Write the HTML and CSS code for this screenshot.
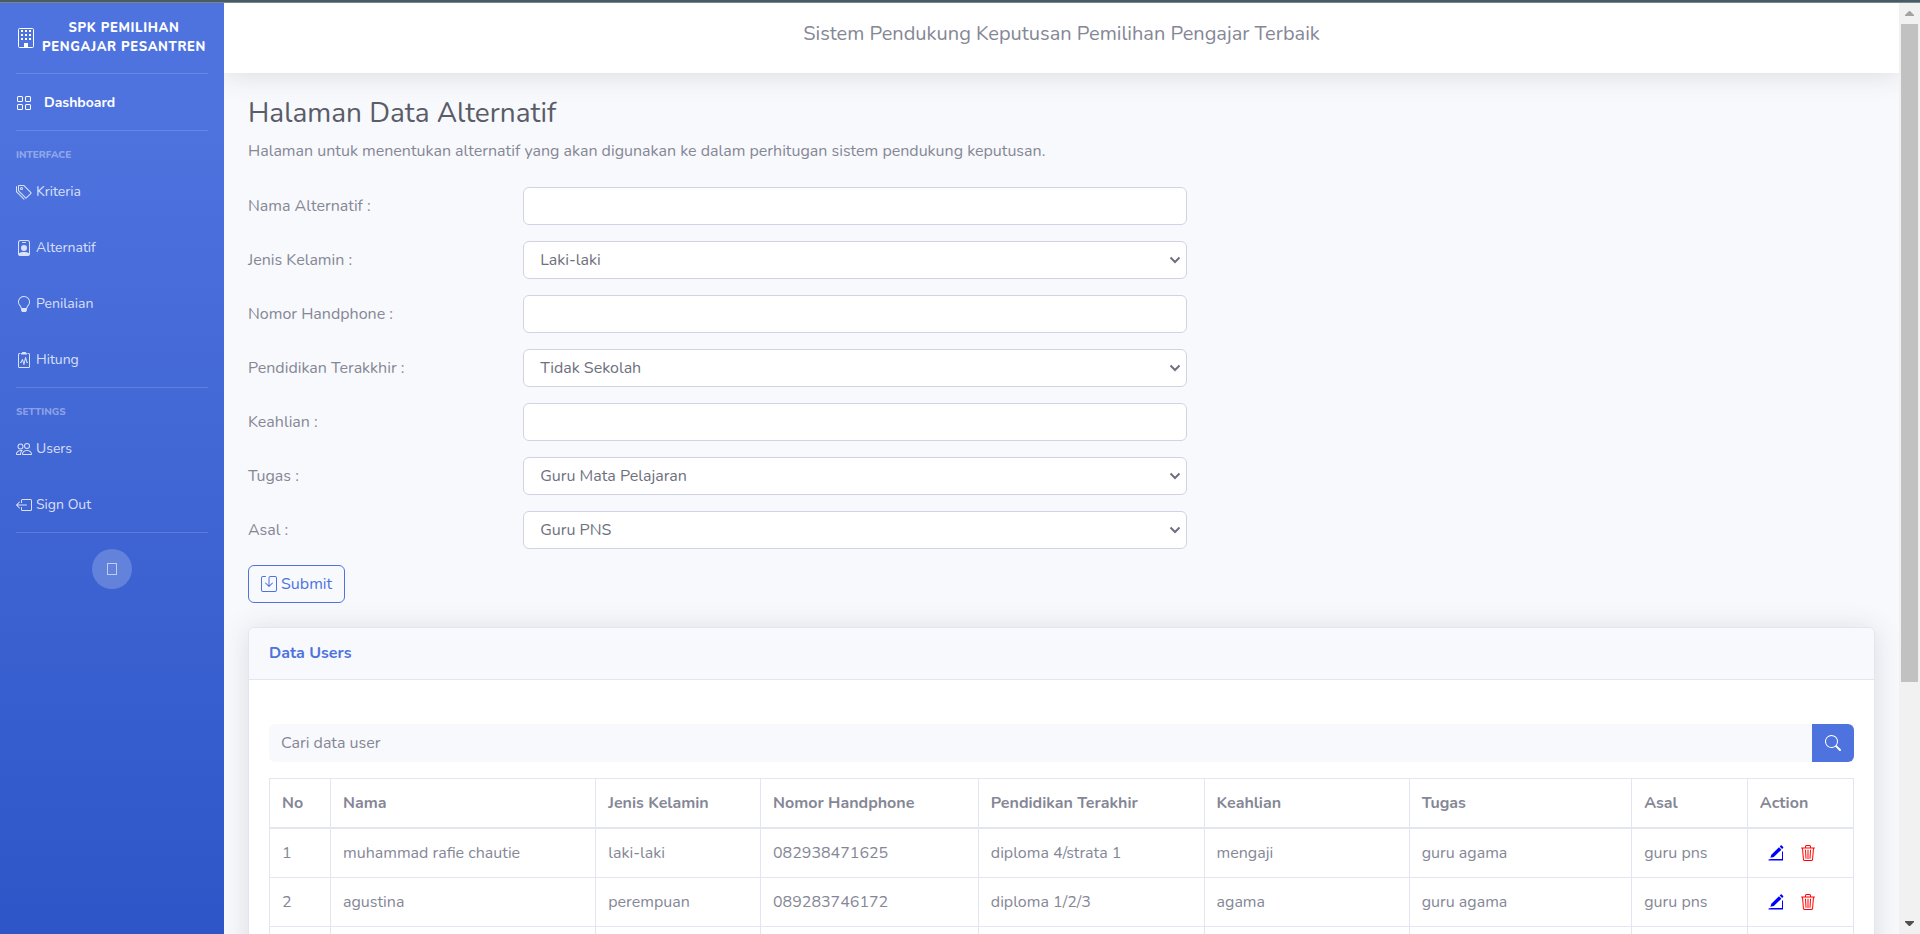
FILE: index.html
```html
<!DOCTYPE html>
<html lang="id">
<head>
<meta charset="utf-8">
<title>SPK Pemilihan Pengajar Pesantren</title>
<link rel="stylesheet" href="styles.css">
</head>
<body>
<div class="frame-edge"></div>
<div class="viewport">
  <nav class="sidebar">
    <a class="brand" href="#">
      <svg class="brand-icon" viewBox="0 0 20 20"><rect x="2.500" y=".5" width="15" height="19" rx="1" fill="none" stroke="currentColor"/><path d="M5 2h2v2H5zM9 2h2v2H9zM13 2h2v2h-2zM5 6h2v2H5zM9 6h2v2H9zM13 6h2v2h-2zM5 10h2v2H5zM9 10h2v2H9zM13 10h2v2h-2zM8 15h4v5H8z"/></svg>
      <span class="brand-text">SPK Pemilihan Pengajar Pesantren</span>
    </a>
    <hr class="divider">
    <a class="nav-link nav-link-active" href="#">
      <svg class="icon" viewBox="0 0 16 16"><path d="M1 2.500A1.500 1.500 0 0 1 2.500 1h3A1.500 1.500 0 0 1 7 2.500v3A1.500 1.500 0 0 1 5.500 7h-3A1.500 1.500 0 0 1 1 5.500zM2.500 2a.5.5 0 0 0-.5.5v3a.5.5 0 0 0 .5.5h3a.5.5 0 0 0 .5-.5v-3a.5.5 0 0 0-.5-.5zm6.500.5A1.500 1.500 0 0 1 10.500 1h3A1.500 1.500 0 0 1 15 2.500v3A1.500 1.500 0 0 1 13.500 7h-3A1.500 1.500 0 0 1 9 5.500zm1.500-.5a.5.5 0 0 0-.5.5v3a.5.5 0 0 0 .5.5h3a.5.5 0 0 0 .5-.5v-3a.5.5 0 0 0-.5-.5zM1 10.500A1.500 1.500 0 0 1 2.500 9h3A1.500 1.500 0 0 1 7 10.500v3A1.500 1.500 0 0 1 5.500 15h-3A1.500 1.500 0 0 1 1 13.500zm1.500-.5a.5.5 0 0 0-.5.5v3a.5.5 0 0 0 .5.5h3a.5.5 0 0 0 .5-.5v-3a.5.5 0 0 0-.5-.5zm6.500.5A1.500 1.500 0 0 1 10.500 9h3a1.500 1.500 0 0 1 1.500 1.500v3a1.500 1.500 0 0 1-1.500 1.500h-3A1.500 1.500 0 0 1 9 13.500zm1.500-.5a.5.5 0 0 0-.5.5v3a.5.5 0 0 0 .5.5h3a.5.5 0 0 0 .5-.5v-3a.5.5 0 0 0-.5-.5z"/></svg>
      <span>Dashboard</span>
    </a>
    <hr class="divider">
    <div class="nav-heading">Interface</div>
    <a class="nav-link" href="#">
      <svg class="icon" viewBox="0 0 16 16"><path d="M3 2v4.586l7 7L14.586 9l-7-7zM2 2a1 1 0 0 1 1-1h4.586a1 1 0 0 1 .707.293l7 7a1 1 0 0 1 0 1.414l-4.586 4.586a1 1 0 0 1-1.414 0l-7-7A1 1 0 0 1 2 6.586z"/><path d="M5.500 5a.5.5 0 1 1 0-1 .5.5 0 0 1 0 1m0 1a1.500 1.500 0 1 0 0-3 1.500 1.500 0 0 0 0 3M1 7.086a1 1 0 0 0 .293.707L8.750 15.250l-.043.043a1 1 0 0 1-1.414 0l-7-7A1 1 0 0 1 0 7.586V3a1 1 0 0 1 1-1z"/></svg>
      <span>Kriteria</span>
    </a>
    <a class="nav-link" href="#">
      <svg class="icon" viewBox="0 0 16 16"><path d="M6.500 2a.5.5 0 0 0 0 1h3a.5.5 0 0 0 0-1zM11 8a3 3 0 1 1-6 0 3 3 0 0 1 6 0"/><path d="M4.500 0A2.500 2.500 0 0 0 2 2.500V14a2 2 0 0 0 2 2h8a2 2 0 0 0 2-2V2.500A2.500 2.500 0 0 0 11.500 0zM3 2.500A1.500 1.500 0 0 1 4.500 1h7A1.500 1.500 0 0 1 13 2.500v10.795a4.200 4.200 0 0 0-.776-.492C11.392 12.387 10.063 12 8 12s-3.392.387-4.224.803a4.200 4.200 0 0 0-.776.492z"/></svg>
      <span>Alternatif</span>
    </a>
    <a class="nav-link" href="#">
      <svg class="icon" viewBox="0 0 16 16"><path d="M2 6a6 6 0 1 1 10.174 4.310c-.203.196-.359.4-.453.619l-.762 1.769A.5.5 0 0 1 10.500 13a.5.5 0 0 1 0 1 .5.5 0 0 1 0 1l-.224.447a1 1 0 0 1-.894.553H6.618a1 1 0 0 1-.894-.553L5.500 15a.5.5 0 0 1 0-1 .5.5 0 0 1 0-1 .5.5 0 0 1-.46-.302l-.761-1.770a2 2 0 0 0-.453-.618A5.980 5.980 0 0 1 2 6m6-5a5 5 0 0 0-3.479 8.592c.263.254.514.564.676.941L5.830 12h4.342l.632-1.467c.162-.377.413-.687.676-.941A5 5 0 0 0 8 1"/></svg>
      <span>Penilaian</span>
    </a>
    <a class="nav-link" href="#">
      <svg class="icon" viewBox="0 0 16 16"><path d="M9.500 0a.5.5 0 0 1 .5.5.5.5 0 0 0 .5.5.5.5 0 0 1 .5.5V2a.5.5 0 0 1-.5.5h-5A.5.5 0 0 1 5 2v-.5a.5.5 0 0 1 .5-.5.5.5 0 0 0 .5-.5.5.5 0 0 1 .5-.5z"/><path d="M3 2.500a.5.5 0 0 1 .5-.5H4a.5.5 0 0 0 0-1h-.5A1.500 1.500 0 0 0 2 2.500v12A1.500 1.500 0 0 0 3.500 16h9a1.500 1.500 0 0 0 1.500-1.500v-12A1.500 1.500 0 0 0 12.500 1H12a.5.5 0 0 0 0 1h.5a.5.5 0 0 1 .5.5v12a.5.5 0 0 1-.5.5h-9a.5.5 0 0 1-.5-.5z"/><path d="M9.979 5.356a.5.5 0 0 0-.968.040L7.920 10.490l-.940-3.135a.5.5 0 0 0-.926-.080L4.690 10H4.500a.5.5 0 0 0 0 1H5a.5.5 0 0 0 .447-.276l.936-1.873 1.138 3.793a.5.5 0 0 0 .968-.040L9.580 7.510l.940 3.135A.5.5 0 0 0 11 11h.5a.5.5 0 0 0 0-1h-.128z"/></svg>
      <span>Hitung</span>
    </a>
    <hr class="divider">
    <div class="nav-heading">Settings</div>
    <a class="nav-link" href="#">
      <svg class="icon" viewBox="0 0 16 16"><path d="M15 14s1 0 1-1-1-4-5-4-5 3-5 4 1 1 1 1zm-7.978-1L7 12.996c.001-.264.167-1.030.760-1.720C8.312 10.629 9.282 10 11 10c1.717 0 2.687.630 3.240 1.276.593.690.758 1.457.760 1.720l-.008.002-.014.002zM11 7a2 2 0 1 0 0-4 2 2 0 0 0 0 4m3-2a3 3 0 1 1-6 0 3 3 0 0 1 6 0M6.936 9.280a6 6 0 0 0-1.230-.247A7 7 0 0 0 5 9c-4 0-5 3-5 4q0 1 1 1h4.216A2.240 2.240 0 0 1 5 13c0-1.010.377-2.042 1.090-2.904.243-.294.526-.569.846-.816M4.920 10A5.500 5.500 0 0 0 4 13H1c0-.260.164-1.030.760-1.724.545-.636 1.492-1.256 3.160-1.275zM1.500 5.500a3 3 0 1 1 6 0 3 3 0 0 1-6 0m3-2a2 2 0 1 0 0 4 2 2 0 0 0 0-4"/></svg>
      <span>Users</span>
    </a>
    <a class="nav-link" href="#">
      <svg class="icon" viewBox="0 0 16 16"><path fill-rule="evenodd" d="M6 12.500a.5.5 0 0 0 .5.5h8a.5.5 0 0 0 .5-.5v-9a.5.5 0 0 0-.5-.5h-8a.5.5 0 0 0-.5.5v2a.5.5 0 0 1-1 0v-2A1.500 1.500 0 0 1 6.500 2h8A1.500 1.500 0 0 1 16 3.500v9a1.500 1.500 0 0 1-1.500 1.500h-8A1.500 1.500 0 0 1 5 12.500v-2a.5.5 0 0 1 1 0z"/><path fill-rule="evenodd" d="M.146 8.354a.5.5 0 0 1 0-.708l3-3a.5.5 0 1 1 .708.708L1.707 7.500H10.500a.5.5 0 0 1 0 1H1.707l2.147 2.146a.5.5 0 0 1-.708.708z"/></svg>
      <span>Sign Out</span>
    </a>
    <hr class="divider">
    <button class="toggle" type="button" aria-label="Toggle sidebar"><span class="toggle-glyph"></span></button>
  </nav>

  <main class="content">
    <header class="topbar">Sistem Pendukung Keputusan Pemilihan Pengajar Terbaik</header>
    <div class="page">
      <h1 class="page-title">Halaman Data Alternatif</h1>
      <p class="lead">Halaman untuk menentukan alternatif yang akan digunakan ke dalam perhitugan sistem pendukung keputusan.</p>

      <form class="form">
        <div class="form-row"><label class="form-label" for="nama">Nama Alternatif :</label><input class="control" id="nama" type="text"></div>
        <div class="form-row"><label class="form-label" for="jk">Jenis Kelamin :</label><select class="control select" id="jk"><option>Laki-laki</option><option>Perempuan</option></select></div>
        <div class="form-row"><label class="form-label" for="hp">Nomor Handphone :</label><input class="control" id="hp" type="text"></div>
        <div class="form-row"><label class="form-label" for="pendidikan">Pendidikan Terakkhir :</label><select class="control select" id="pendidikan"><option>Tidak Sekolah</option></select></div>
        <div class="form-row"><label class="form-label" for="keahlian">Keahlian :</label><input class="control" id="keahlian" type="text"></div>
        <div class="form-row"><label class="form-label" for="tugas">Tugas :</label><select class="control select" id="tugas"><option>Guru Mata Pelajaran</option></select></div>
        <div class="form-row"><label class="form-label" for="asal">Asal :</label><select class="control select" id="asal"><option>Guru PNS</option></select></div>
        <button class="submit" type="button">
          <svg class="icon" viewBox="0 0 16 16"><path d="M2 1a1 1 0 0 0-1 1v12a1 1 0 0 0 1 1h12a1 1 0 0 0 1-1V2a1 1 0 0 0-1-1H9.500a1 1 0 0 0-1 1v7.293l2.646-2.647a.5.5 0 0 1 .708.708l-3.500 3.500a.5.5 0 0 1-.708 0l-3.500-3.500a.5.5 0 1 1 .708-.708L7.500 9.293V2a2 2 0 0 1 2-2H14a2 2 0 0 1 2 2v12a2 2 0 0 1-2 2H2a2 2 0 0 1-2-2V2a2 2 0 0 1 2-2h2.500a.5.5 0 0 1 0 1z"/></svg>
          <span>Submit</span>
        </button>
      </form>

      <section class="card">
        <h2 class="card-header">Data Users</h2>
        <div class="card-body">
          <form class="search">
            <input class="search-input" type="text" placeholder="Cari data user" aria-label="Cari data user">
            <button class="search-button" type="button" aria-label="Cari"><svg class="icon" viewBox="0 0 16 16"><path d="M11.742 10.344a6.500 6.500 0 1 0-1.397 1.398h-.001q.044.060.098.115l3.850 3.850a1 1 0 0 0 1.415-1.414l-3.850-3.850a1 1 0 0 0-.115-.100zM12 6.500a5.500 5.500 0 1 1-11 0 5.500 5.500 0 0 1 11 0"/></svg></button>
          </form>
          <table class="table">
            <colgroup><col class="col-no"><col class="col-nama"><col class="col-kelamin"><col class="col-hp"><col class="col-pendidikan"><col class="col-keahlian"><col class="col-tugas"><col class="col-asal"><col class="col-action"></colgroup>
            <thead>
              <tr><th>No</th><th>Nama</th><th>Jenis Kelamin</th><th>Nomor Handphone</th><th>Pendidikan Terakhir</th><th>Keahlian</th><th>Tugas</th><th>Asal</th><th>Action</th></tr>
            </thead>
            <tbody>
              <tr><td>1</td><td>muhammad rafie chautie</td><td>laki-laki</td><td>082938471625</td><td>diploma 4/strata 1</td><td>mengaji</td><td>guru agama</td><td>guru pns</td>
                <td><div class="actions">
                  <button class="action action-edit" type="button" aria-label="Edit"><svg class="icon" viewBox="0 0 16 16"><path d="M12.700.6a.8.8 0 0 1 1.100 0l1.300 1.300a.8.8 0 0 1 0 1.100l-1 1-2.400-2.400zM11 2.300l2.400 2.400-7.600 7.200-3.400.9.900-3.100zM15 6v9.500H.5v-1L3 14h11V7z"/></svg></button>
                  <button class="action action-delete" type="button" aria-label="Hapus"><svg class="icon" viewBox="0 0 16 16"><path d="M6.500 1h3a.5.5 0 0 1 .5.5v1H6v-1a.5.5 0 0 1 .5-.5M11 2.500v-1A1.500 1.500 0 0 0 9.500 0h-3A1.500 1.500 0 0 0 5 1.500v1H1.500a.5.5 0 0 0 0 1h.538l.853 10.660A2 2 0 0 0 4.885 16h6.230a2 2 0 0 0 1.994-1.840l.853-10.660h.538a.5.5 0 0 0 0-1zm1.958 1-.846 10.580a1 1 0 0 1-.997.920h-6.230a1 1 0 0 1-.997-.920L3.042 3.500zm-7.487 1a.5.5 0 0 1 .528.470l.5 8.500a.5.5 0 0 1-.998.060L5 5.030a.5.5 0 0 1 .470-.530zm5.058 0a.5.5 0 0 1 .470.530l-.5 8.500a.5.5 0 1 1-.998-.060l.5-8.500a.5.5 0 0 1 .528-.470M8 4.500a.5.5 0 0 1 .5.5v8.500a.5.5 0 0 1-1 0V5a.5.5 0 0 1 .5-.5"/></svg></button>
                </div></td></tr>
              <tr><td>2</td><td>agustina</td><td>perempuan</td><td>089283746172</td><td>diploma 1/2/3</td><td>agama</td><td>guru agama</td><td>guru pns</td>
                <td><div class="actions">
                  <button class="action action-edit" type="button" aria-label="Edit"><svg class="icon" viewBox="0 0 16 16"><path d="M12.700.6a.8.8 0 0 1 1.100 0l1.300 1.300a.8.8 0 0 1 0 1.100l-1 1-2.400-2.400zM11 2.300l2.400 2.400-7.600 7.200-3.400.9.900-3.100zM15 6v9.500H.5v-1L3 14h11V7z"/></svg></button>
                  <button class="action action-delete" type="button" aria-label="Hapus"><svg class="icon" viewBox="0 0 16 16"><path d="M6.500 1h3a.5.5 0 0 1 .5.5v1H6v-1a.5.5 0 0 1 .5-.5M11 2.500v-1A1.500 1.500 0 0 0 9.500 0h-3A1.500 1.500 0 0 0 5 1.500v1H1.500a.5.5 0 0 0 0 1h.538l.853 10.660A2 2 0 0 0 4.885 16h6.230a2 2 0 0 0 1.994-1.840l.853-10.660h.538a.5.5 0 0 0 0-1zm1.958 1-.846 10.580a1 1 0 0 1-.997.920h-6.230a1 1 0 0 1-.997-.920L3.042 3.500zm-7.487 1a.5.5 0 0 1 .528.470l.5 8.500a.5.5 0 0 1-.998.060L5 5.030a.5.5 0 0 1 .470-.530zm5.058 0a.5.5 0 0 1 .470.530l-.5 8.500a.5.5 0 1 1-.998-.060l.5-8.500a.5.5 0 0 1 .528-.470M8 4.500a.5.5 0 0 1 .5.5v8.500a.5.5 0 0 1-1 0V5a.5.5 0 0 1 .5-.5"/></svg></button>
                </div></td></tr>
              <tr><td></td><td></td><td></td><td></td><td></td><td></td><td></td><td></td><td></td></tr>
            </tbody>
          </table>
        </div>
      </section>
    </div>
  </main>

  <div class="scrollbar" aria-hidden="true">
    <div class="scroll-step"><svg class="scroll-arrow" viewBox="0 0 9 5"><path fill="#a3a3a3" d="M4 0h1l4 4v1H0V4z"/></svg></div>
    <div class="scroll-track"><div class="scroll-thumb"></div></div>
    <div class="scroll-step"><svg class="scroll-arrow" viewBox="0 0 9 5"><path fill="#505050" d="M0 0h9v1L5 5H4L0 1z"/></svg></div>
  </div>
</div>
</body>
</html>
```

FILE: styles.css
```css
* {
  box-sizing: border-box;
}

body {
  margin: 0;
  height: 100vh;
  overflow: hidden;
  display: flex;
  flex-direction: column;
  background: #f8f9fc;
  color: #858796;
  font: 16px/24px Nunito, "Open Sans", sans-serif;
}

button,
input,
select {
  font: inherit;
  color: inherit;
}

.frame-edge {
  flex: none;
  height: 3px;
  background: #495b66;
  border-bottom: 1px solid #74888d;
}

.viewport {
  flex: 1;
  min-height: 0;
  display: flex;
}

.icon {
  flex: none;
  display: block;
  width: 16px;
  height: 16px;
  fill: currentColor;
}

/* Sidebar */
.sidebar {
  flex: none;
  width: 224px;
  display: flex;
  flex-direction: column;
  background: linear-gradient(180deg, #4e73df 13%, #224abe 135%);
  color: #fff;
}

.brand {
  height: 70px;
  padding: 0 16px;
  display: flex;
  align-items: center;
  gap: 4px;
  color: #fff;
  text-decoration: none;
}

.brand-icon {
  flex: none;
  width: 20px;
  height: 20px;
  fill: currentColor;
}

.brand-text {
  flex: 1;
  font-size: 13px;
  line-height: 19px;
  font-weight: 800;
  letter-spacing: 0.05em;
  text-align: center;
  text-transform: uppercase;
}

.divider {
  width: auto;
  margin: 0 16px;
  border: 0;
  border-top: 1px solid rgba(255, 255, 255, 0.15);
}

.nav-heading {
  margin-top: 16px;
  padding: 0 16px;
  font-size: 10px;
  line-height: 16px;
  font-weight: 800;
  text-transform: uppercase;
  color: rgba(255, 255, 255, 0.4);
}

.nav-link {
  height: 56px;
  padding: 2px 16px 0;
  display: flex;
  align-items: center;
  gap: 4px;
  font-size: 14px;
  color: rgba(255, 255, 255, 0.8);
  text-decoration: none;
}

.nav-link-active {
  gap: 12px;
  font-weight: 700;
  color: #fff;
}

.toggle {
  align-self: center;
  width: 40px;
  height: 40px;
  margin-top: 16px;
  padding: 0;
  display: grid;
  place-items: center;
  border: 0;
  border-radius: 50%;
  background: rgba(255, 255, 255, 0.2);
}

.toggle-glyph {
  width: 10px;
  height: 12px;
  border: 1px solid rgba(255, 255, 255, 0.6);
}

/* Content */
.content {
  flex: 1;
  min-width: 0;
  overflow: hidden;
}

.topbar {
  height: 70px;
  padding-top: 19px;
  background: #fff;
  box-shadow: 0 2px 28px rgba(58, 59, 69, 0.15);
  font-size: 20px;
  text-align: center;
}

.page {
  padding: 24px;
}

.page-title {
  margin: 0 0 10px;
  font-size: 28px;
  line-height: 32px;
  font-weight: 400;
  color: #5a5c69;
}

.lead {
  margin: 0 0 24px;
}

.form {
  display: flex;
  flex-direction: column;
  gap: 16px;
}

.form-row {
  display: grid;
  grid-template-columns: repeat(12, minmax(0, 1fr));
  column-gap: 24px;
  align-items: center;
}

.form-label {
  grid-column: span 2;
}

.control {
  grid-column: span 5;
  width: 100%;
  height: 38px;
  padding: 6px 12px;
  border: 1px solid #d1d3e2;
  border-radius: 6px;
  background: #fff;
  color: #6e707e;
}

.select {
  appearance: none;
  padding: 6px 24px 6px 16px;
  background: #fff url("data:image/svg+xml,%3Csvg xmlns='http://www.w3.org/2000/svg' viewBox='0 0 12 8'%3E%3Cpath d='M1.500 1.500 6 6l4.500-4.500' fill='none' stroke='%236e707e' stroke-width='2'/%3E%3C/svg%3E") no-repeat right 5px center / 12px 8px;
}

.submit {
  align-self: flex-start;
  height: 38px;
  padding: 0 12px;
  display: flex;
  align-items: center;
  gap: 4px;
  border: 1px solid #4e73df;
  border-radius: 6px;
  background: transparent;
  color: #4e73df;
}

/* Card */
.card {
  margin-top: 24px;
  border: 1px solid #e3e6f0;
  border-radius: 6px;
  background: #fff;
  box-shadow: 0 2px 28px rgba(58, 59, 69, 0.15);
}

.card-header {
  margin: 0;
  padding: 13px 20px 14px;
  border-bottom: 1px solid #e3e6f0;
  border-radius: 5px 5px 0 0;
  background: #f8f9fc;
  font-size: 16px;
  font-weight: 700;
  color: #4e73df;
}

.card-body {
  padding: 44px 20px 20px;
}

.search {
  display: flex;
  margin-bottom: 16px;
}

.search-input {
  flex: 1;
  height: 38px;
  padding: 0 12px;
  border: 0;
  border-radius: 6px 0 0 6px;
  background: #f8f9fc;
}

.search-input::placeholder {
  color: #858796;
}

.search-button {
  width: 42px;
  padding: 0;
  display: grid;
  place-items: center;
  border: 0;
  border-radius: 0 6px 6px 0;
  background: #4e73df;
  color: #fff;
}

.table {
  width: 100%;
  table-layout: fixed;
  border-collapse: collapse;
}

.table th,
.table td {
  height: 49px;
  padding: 12px;
  border: 1px solid #e3e6f0;
  text-align: left;
}

.table th {
  border-bottom-width: 2px;
  font-weight: 700;
}

.col-no { width: 3.85%; }
.col-nama { width: 16.75%; }
.col-kelamin { width: 10.4%; }
.col-hp { width: 13.75%; }
.col-pendidikan { width: 14.25%; }
.col-keahlian { width: 12.95%; }
.col-tugas { width: 14.05%; }
.col-asal { width: 7.3%; }
.col-action { width: 6.7%; }

.actions {
  display: flex;
}

.action {
  padding: 0 8px;
  border: 0;
  background: none;
}

.action-edit {
  color: #00f;
}

.action-delete {
  color: #f00;
}

/* Scrollbar */
.scrollbar {
  flex: none;
  width: 21px;
  display: flex;
  flex-direction: column;
  background: #f1f1f1;
}

.scroll-step {
  height: 21px;
  display: grid;
  place-items: center;
}

.scroll-arrow {
  width: 9px;
  height: 5px;
}

.scroll-track {
  flex: 1;
  padding: 0 2px;
}

.scroll-thumb {
  height: 74%;
  background: #c1c1c1;
}
```
